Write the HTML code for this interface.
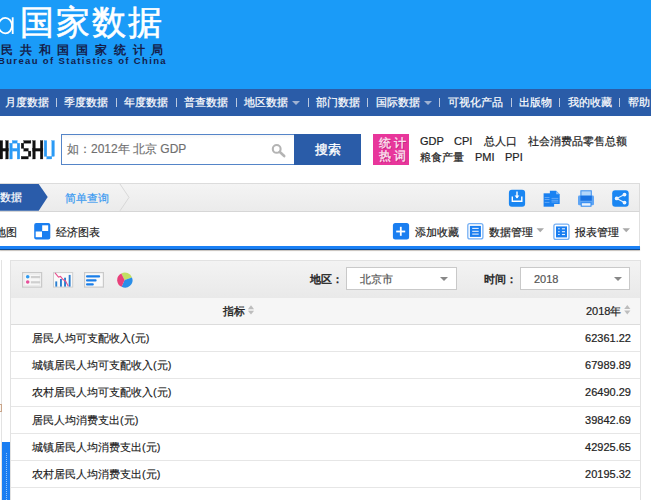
<!DOCTYPE html>
<html><head><meta charset="utf-8">
<style>
*{box-sizing:border-box}
html,body{margin:0;padding:0}
body{width:651px;height:500px;overflow:hidden;position:relative;background:#fff;font-family:"Liberation Sans",sans-serif;color:#222}
.a{position:absolute}
#hdr{left:0;top:0;width:651px;height:89px;background:#1a9bf8}
#logo{left:20px;top:2px;font-size:34px;letter-spacing:2px;color:#fff;white-space:nowrap;line-height:40px;-webkit-text-stroke:0.6px #fff}
#cn{left:1px;top:44px;font-size:12px;color:#14204a;letter-spacing:6.8px;white-space:nowrap;line-height:13px;font-weight:bold}
#en{left:-2px;top:55px;font-size:9.5px;color:#14204a;letter-spacing:1.35px;white-space:nowrap;line-height:11px;font-weight:bold}
#nav{left:0;top:89px;width:651px;height:27px;background:#2a5ca8}
.ni{top:7px;font-size:11px;color:#fff;white-space:nowrap;line-height:13px;-webkit-text-stroke:0.2px #fff}
.sep{top:98px;width:1px;height:9px;background:#b9c8e0}
.dd{width:0;height:0;border-left:4px solid transparent;border-right:4px solid transparent;border-top:4px solid #9fb2d2}
#sbox{left:61px;top:134px;width:234px;height:31px;border:1px solid #5585c8;background:linear-gradient(#f6f6f6,#fff 4px)}
#ph{left:67px;top:142px;font-size:12px;color:#6f6f6f;-webkit-text-stroke:0.15px #6f6f6f;white-space:nowrap;line-height:15px}
#sbtn{left:294px;top:134px;width:67px;height:31px;background:#2a5ca8;color:#fff;font-size:12.5px;line-height:33px;text-align:center;-webkit-text-stroke:0.35px #fff}
#hot{left:373px;top:134px;width:36px;height:31px;background:#e8369b}
.hw{font-size:11px;color:#222;white-space:nowrap;line-height:13px;-webkit-text-stroke:0.2px #222}
#bc{left:-5px;top:183px;width:645px;height:29px;background:linear-gradient(#f4f4f4,#ebebeb);border:1px solid #dcdcdc;border-bottom:1px solid #d6d6d6}
#tb{left:-5px;top:212px;width:645px;height:34px;background:#fff;border-right:1px solid #e0e0e0}
#bl{left:0;top:246px;width:640px;height:4px;background:#1a80f5;border-bottom:1px solid #0c4a94;box-shadow:0 1px 1px rgba(70,50,30,0.3)}
.tt{font-size:11px;color:#222;white-space:nowrap;line-height:13px;-webkit-text-stroke:0.2px currentColor}
#lp{left:-5px;top:260px;width:7px;height:240px;border-right:1px solid #e3e3e3;background:#fff}
#pn{left:10px;top:260px;width:631px;height:260px;border:1px solid #e2e2e2;border-bottom:none;background:#fff}
#ptb{left:11px;top:261px;width:629px;height:37px;background:linear-gradient(#f3f3f3,#e9e9e9)}
#phd{left:11px;top:298px;width:629px;height:27px;background:#f6f6f6;border-bottom:1px solid #dcdcdc}
.row{left:11px;width:629px;height:27px;border-bottom:1px solid #e6e6e6}
.rt{left:32px;font-size:11px;color:#222;white-space:nowrap;line-height:13px;-webkit-text-stroke:0.15px #222}
.rv{right:20px;font-size:11px;color:#222;white-space:nowrap;line-height:13px;text-align:right;-webkit-text-stroke:0.2px #222}
.sel{height:23px;border:1px solid #c9c9c9;background:#fff}
</style></head><body>
<div id="hdr" class="a"></div>
<svg class="a" style="left:0;top:0" width="20" height="40"><ellipse cx="5.3" cy="25.6" rx="6.7" ry="7.7" fill="none" stroke="#fff" stroke-width="1.8"/><rect x="11.8" y="17.3" width="1.8" height="16.7" fill="#fff"/></svg>
<div id="logo" class="a">国家数据</div>
<div id="cn" class="a">民共和国国家统计局</div>
<div id="en" class="a">Bureau of Statistics of China</div>

<div id="nav" class="a"></div>
<div class="a ni" style="left:5px;top:96px">月度数据</div>
<div class="a sep" style="left:56px"></div>
<div class="a ni" style="left:64px;top:96px">季度数据</div>
<div class="a sep" style="left:116px"></div>
<div class="a ni" style="left:124px;top:96px">年度数据</div>
<div class="a sep" style="left:176px"></div>
<div class="a ni" style="left:184px;top:96px">普查数据</div>
<div class="a sep" style="left:236px"></div>
<div class="a ni" style="left:244px;top:96px">地区数据</div>
<div class="a dd" style="left:292px;top:101px"></div>
<div class="a sep" style="left:308px"></div>
<div class="a ni" style="left:316px;top:96px">部门数据</div>
<div class="a sep" style="left:367px"></div>
<div class="a ni" style="left:376px;top:96px">国际数据</div>
<div class="a dd" style="left:424px;top:101px"></div>
<div class="a sep" style="left:439px"></div>
<div class="a ni" style="left:448px;top:96px">可视化产品</div>
<div class="a sep" style="left:511px"></div>
<div class="a ni" style="left:519px;top:96px">出版物</div>
<div class="a sep" style="left:559px"></div>
<div class="a ni" style="left:568px;top:96px">我的收藏</div>
<div class="a sep" style="left:619px"></div>
<div class="a ni" style="left:628px;top:96px">帮助</div>

<svg class="a" style="left:0;top:0" width="60" height="165"><g fill="#111" stroke="#111" stroke-width="0.3">
<rect x="0" y="140.6" width="2.7" height="18.4"/><rect x="5.7" y="140.6" width="2.6" height="18.4"/><rect x="0" y="148.4" width="8.3" height="2.7"/>
<rect x="23.8" y="140.6" width="7.1" height="2.6"/><rect x="21.2" y="143.2" width="2.6" height="5.2"/><rect x="23.8" y="148.4" width="4.5" height="2.7"/><rect x="28.3" y="151.1" width="2.6" height="5.3"/><rect x="21.2" y="156.4" width="7.1" height="2.6"/>
<rect x="32.7" y="140.6" width="2.6" height="18.4"/><rect x="40.3" y="140.6" width="2.6" height="18.4"/><rect x="32.7" y="148.4" width="10.2" height="2.7"/>
</g><g fill="#2a9af5" stroke="#2a9af5" stroke-width="0.3">
<rect x="9.7" y="143.2" width="2.6" height="15.8"/><rect x="17.2" y="143.2" width="2.6" height="15.8"/><rect x="12.3" y="140.6" width="4.9" height="2.6"/><rect x="12.3" y="148.4" width="4.9" height="2.7"/>
<rect x="44.2" y="140.6" width="2.6" height="15.8"/><rect x="51.8" y="140.6" width="2.6" height="15.8"/><rect x="46.8" y="156.4" width="5" height="2.6"/>
</g></svg>
<div id="sbox" class="a"></div>
<div id="ph" class="a">如：2012年 北京 GDP</div>
<svg class="a" style="left:0;top:0" width="300" height="170"><circle cx="276.7" cy="148.9" r="3.9" fill="none" stroke="#b4b4b4" stroke-width="2.1"/><line x1="279.6" y1="151.8" x2="284.2" y2="156" stroke="#b4b4b4" stroke-width="2.6" stroke-linecap="round"/></svg>
<div id="sbtn" class="a">搜索</div>
<div id="hot" class="a"></div>
<div class="a" style="left:379px;top:137px;font-size:11.5px;line-height:12.7px;color:#fbe6f1;letter-spacing:3px;white-space:nowrap;-webkit-text-stroke:0.3px #fbe6f1;text-shadow:0.6px 0.6px 0 rgba(110,0,60,0.35)">统计<br>热词</div>
<div class="a hw" style="left:420px;top:135px">GDP</div>
<div class="a hw" style="left:454px;top:135px">CPI</div>
<div class="a hw" style="left:484px;top:135px">总人口</div>
<div class="a hw" style="left:528px;top:135px">社会消费品零售总额</div>
<div class="a hw" style="left:420px;top:151px">粮食产量</div>
<div class="a hw" style="left:475px;top:151px">PMI</div>
<div class="a hw" style="left:505px;top:151px">PPI</div>

<div id="bc" class="a"></div>
<svg class="a" style="left:0;top:184px" width="140" height="28"><polygon points="0,0 38.7,0 47.7,13 38.7,26.8 0,26.8" fill="#2a5caa"/><polyline points="120,0 129,13.4 120,26.8" fill="none" stroke="#d8d8d8" stroke-width="1"/></svg>
<div class="a tt" style="left:0px;top:191px;color:#fff;-webkit-text-stroke:0.2px #fff">数据</div>
<div class="a tt" style="left:65px;top:192px;color:#3a9af0;font-size:11.3px">简单查询</div>

<div id="tb" class="a"></div>
<div class="a tt" style="left:-5px;top:226px">地图</div>
<div class="a tt" style="left:56px;top:226px">经济图表</div>
<div class="a tt" style="left:415px;top:226px">添加收藏</div>
<div class="a tt" style="left:489px;top:226px">数据管理</div>
<div class="a tt" style="left:575px;top:226px">报表管理</div>
<div id="bl" class="a"></div>

<div id="lp" class="a"></div>
<div class="a" style="left:2px;top:442px;width:8px;height:58px;background:#1a7ef2"></div><div class="a" style="left:6px;top:453px;width:0;height:47px;border-left:1px dotted rgba(255,255,255,0.55)"></div><div class="a" style="left:-6px;top:404px;width:8px;height:8px;border:1px solid #c9a58a;background:#fbf6f1"></div>
<div id="pn" class="a"></div>
<div id="ptb" class="a"></div>
<div class="a tt" style="left:310px;top:273px;-webkit-text-stroke:0.45px #222">地区：</div>
<div class="a sel" style="left:346px;top:267px;width:111px"></div>
<div class="a tt" style="left:360px;top:273px;color:#555">北京市</div>
<div class="a dd" style="left:440px;top:277px;border-top-color:#888"></div>
<div class="a tt" style="left:484px;top:273px;-webkit-text-stroke:0.45px #222">时间：</div>
<div class="a sel" style="left:520px;top:267px;width:110px"></div>
<div class="a tt" style="left:534px;top:273px;color:#555">2018</div>
<div class="a dd" style="left:614px;top:277px;border-top-color:#888"></div>
<div id="phd" class="a"></div>
<div class="a tt" style="left:223px;top:305px;-webkit-text-stroke:0.35px #222">指标</div>
<div class="a tt" style="left:586px;top:305px">2018年</div>

<div class="a row" style="top:325px"></div>
<div class="a row" style="top:352px"></div>
<div class="a row" style="top:380px"></div>
<div class="a row" style="top:407px"></div>
<div class="a row" style="top:434px"></div>
<div class="a row" style="top:461px"></div>
<div class="a rt" style="top:332px">居民人均可支配收入(元)</div>
<div class="a rt" style="top:359px">城镇居民人均可支配收入(元)</div>
<div class="a rt" style="top:386px">农村居民人均可支配收入(元)</div>
<div class="a rt" style="top:414px">居民人均消费支出(元)</div>
<div class="a rt" style="top:441px">城镇居民人均消费支出(元)</div>
<div class="a rt" style="top:468px">农村居民人均消费支出(元)</div>
<div class="a rv" style="top:332px">62361.22</div>
<div class="a rv" style="top:359px">67989.89</div>
<div class="a rv" style="top:386px">26490.29</div>
<div class="a rv" style="top:414px">39842.69</div>
<div class="a rv" style="top:441px">42925.65</div>
<div class="a rv" style="top:468px">20195.32</div>
<svg class="a" style="left:0;top:0" width="651" height="500">
<!-- breadcrumb icons -->
<rect x="508.9" y="189.7" width="16.2" height="17" rx="3" fill="#1a86f2"/>
<path d="M512.3 196.6 V201.2 H521.8 V196.6" fill="none" stroke="#fff" stroke-width="1.4"/>
<line x1="517" y1="191.5" x2="517" y2="198" stroke="#fff" stroke-width="1.4"/>
<path d="M514.6 195.6 L517 198.4 L519.4 195.6 Z" fill="#fff"/>
<path d="M543.6 193.3 H554.1 V206.7 H543.6 Z" fill="#1a80f0"/>
<path d="M549.9 190.7 H556.2 L559.7 194.2 V204 H549.9 Z" fill="#1a82f2"/>
<path d="M556.2 190.9 V194.2 H559.5 Z" fill="#8fc0f7"/>
<g stroke="#6aaaf5" stroke-width="0.9"><line x1="544.6" y1="197.5" x2="549.5" y2="197.5"/><line x1="544.6" y1="199.5" x2="549.5" y2="199.5"/><line x1="544.6" y1="202.4" x2="549.5" y2="202.4"/><line x1="551.5" y1="198.4" x2="558.3" y2="198.4"/><line x1="551.5" y1="200.3" x2="558.3" y2="200.3"/><line x1="551.5" y1="202" x2="558.3" y2="202"/></g>
<rect x="578" y="195.6" width="16" height="9.6" rx="1.2" fill="#5fa5f4"/>
<rect x="580.9" y="190.8" width="10.4" height="5.2" fill="#b3d6fb" stroke="#3d90f0" stroke-width="1"/>
<rect x="580.4" y="195.8" width="11.4" height="4.9" fill="#1a72e2"/>
<rect x="581.2" y="202.7" width="9.8" height="3.5" fill="#eaf3fe" stroke="#2a86f0" stroke-width="1"/>
<rect x="612.2" y="190.3" width="16.5" height="16.5" rx="3" fill="#1a86f2"/>
<g fill="#f2f8ff"><circle cx="624.5" cy="194.6" r="1.9"/><circle cx="616.7" cy="198.4" r="1.9"/><circle cx="624.5" cy="202.6" r="1.9"/></g>
<path d="M624.5 194.6 L616.7 198.4 L624.5 202.6" fill="none" stroke="#e6f1fe" stroke-width="1.1"/>
<!-- toolbar icons -->
<rect x="34.2" y="222.9" width="16.1" height="16.7" rx="2" fill="#1a7ef0"/>
<rect x="42.2" y="225.3" width="6" height="5.7" fill="#fff"/>
<rect x="35.7" y="231.5" width="6.3" height="5.7" fill="#fff"/>
<rect x="392.9" y="223.1" width="16.2" height="16.5" rx="2.5" fill="#1a7ef0"/>
<rect x="396.2" y="230.6" width="9" height="1.8" fill="#fff"/>
<rect x="399.9" y="226.8" width="1.8" height="9" fill="#fff"/>
<rect x="467.8" y="223.6" width="15.1" height="15.3" rx="2" fill="none" stroke="#76b0f4" stroke-width="1.3"/>
<rect x="469.9" y="225.9" width="11" height="11" fill="#1a7ef0"/>
<g stroke="#e6f0fc" stroke-width="1.1"><line x1="472.2" y1="228.4" x2="478.7" y2="228.4"/><line x1="472.2" y1="231.3" x2="478.7" y2="231.3"/><line x1="472.2" y1="234.1" x2="478.7" y2="234.1"/></g>
<rect x="553.9" y="224.1" width="15.1" height="15.3" rx="2" fill="none" stroke="#76b0f4" stroke-width="1.3"/>
<rect x="556" y="226.4" width="11" height="11" fill="#1a7ef0"/>
<g stroke="#e6f0fc" stroke-width="1.1"><line x1="558.1" y1="228.8" x2="559.7" y2="228.8"/><line x1="558.1" y1="231.7" x2="559.7" y2="231.7"/><line x1="558.1" y1="234.5" x2="559.7" y2="234.5"/><line x1="561.9" y1="228.8" x2="565" y2="228.8"/><line x1="561.9" y1="231.7" x2="565" y2="231.7"/><line x1="561.9" y1="234.5" x2="565" y2="234.5"/></g>
<g fill="#a9a9a9"><path d="M536.5 228.3 H544 L540.25 232.3 Z"/><path d="M622.5 228.3 H630 L626.25 232.3 Z"/></g>
<!-- panel icons -->
<rect x="22.6" y="272.6" width="19" height="14.5" fill="#f7f7f7" stroke="#c9c9c9" stroke-width="1.2"/>
<rect x="24.2" y="274.2" width="15.8" height="11.3" fill="none" stroke="#e8e8e8" stroke-width="0.8"/>
<circle cx="27.7" cy="276.8" r="1.8" fill="#2e9af0"/><circle cx="27.7" cy="282" r="1.8" fill="#e6509a"/>
<rect x="30.9" y="276" width="9.2" height="2.2" fill="#cfcfcf"/><rect x="30.9" y="281.2" width="9.2" height="2.2" fill="#cfcfcf"/>
<rect x="53.5" y="272.6" width="19.2" height="14.5" fill="#fafafa" stroke="#cfcfcf" stroke-width="1"/>
<g fill="#2b7fd0"><rect x="55.3" y="281.4" width="1.9" height="5.2"/><rect x="60" y="279" width="1.9" height="7.6"/><rect x="64.1" y="277.7" width="1.9" height="8.9"/><rect x="68.7" y="274.9" width="1.9" height="11.7"/></g>
<polyline points="55,272.8 58.5,277 60.5,276.4 63,279.5 65.5,281 68.3,286.3" fill="none" stroke="#e8508e" stroke-width="1.1"/>
<rect x="84.6" y="272.6" width="18.8" height="14.5" fill="#f9f9f9" stroke="#cacaca" stroke-width="1.2"/>
<g fill="#1a7ee8"><rect x="86" y="275.2" width="14.1" height="2.2" rx="1"/><rect x="86" y="279.2" width="10.6" height="2.2" rx="1"/><rect x="86" y="283.2" width="7.8" height="2.3" rx="1"/></g>
<path d="M124.6 280 L121.3 273.4 A7.4 7.4 0 0 1 132 277.6 Z" fill="#c2df63"/>
<path d="M124.6 280 L132 277.6 A7.4 7.4 0 0 1 121.6 286.8 Z" fill="#2a8ee8"/>
<path d="M124.6 280 L121.6 286.8 A7.4 7.4 0 0 1 121.3 273.4 Z" fill="#e8407a"/>
<!-- sort arrows -->
<g fill="#bdbdbd"><path d="M247.9 309.2 L251 305.2 L254.1 309.2 Z"/><path d="M247.9 310.8 L251 314.6 L254.1 310.8 Z"/><path d="M624.2 309 L627.3 305 L630.4 309 Z"/><path d="M624.2 310.6 L627.3 314.4 L630.4 310.6 Z"/></g>
</svg>
</body></html>
